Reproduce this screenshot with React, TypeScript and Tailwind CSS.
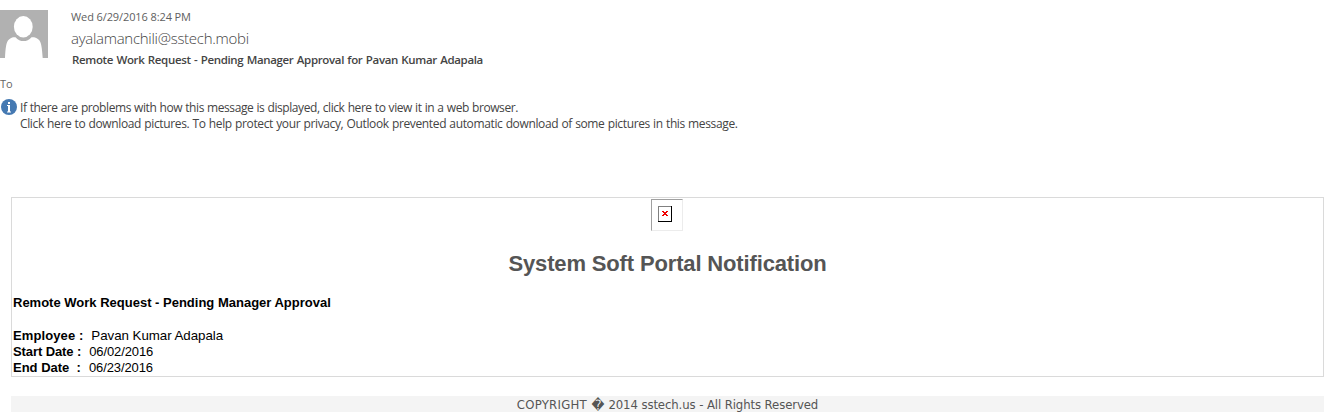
import React from "react";

function Avatar() {
  return (
    <svg className="block h-12 w-12 shrink-0" viewBox="0 0 48 48" aria-hidden="true">
      <rect width="48" height="48" fill="#b1b1b1" />
      <ellipse cx="23.3" cy="16.7" rx="9.4" ry="10.7" fill="#fff" />
      <path d="M5 48C5.6 38 6 32 9 29.5C11 27.5 13 27 15.5 27.2C20 32.4 27 32.4 31.5 27.2C34 27 36.500 27.500 38.500 29.500C41.500 32 42 38 42.700 48Z" fill="#fff" />
    </svg>
  );
}

function InfoIcon() {
  return (
    <svg className="mt-px block h-4 w-4 shrink-0" viewBox="0 0 16 16" aria-hidden="true">
      <circle cx="8" cy="8" r="8" fill="#4579b2" />
      <path d="M7 3H9V5H7ZM6 6H9V12.500H10V13.500H6V12.500H7V7H6Z" fill="#fff" />
    </svg>
  );
}

function BlockedPicture() {
  return (
    <div className="mt-px ml-[639px] flex h-8 w-8 border border-t-[#a0a0a0] border-r-[#ececec] border-b-[#ececec] border-l-[#a0a0a0] pt-[6px] pl-[6px]">
      <svg className="block h-4 w-[14px]" viewBox="0 0 14 16" shapeRendering="crispEdges" aria-hidden="true">
        <path d="M0 0H14V16H0Z" fill="#000" />
        <path d="M0 0H13V15H0Z" fill="#808080" />
        <path d="M1 1H13V15H1Z" fill="#fff" />
        <path d="M4 5h2v1h2v-1h2v1h-1v1h-1v1h1v1h1v1h-2v-1h-2v1h-2v-1h1v-1h1v-1h-1v-1h-1z" fill="#f00000" />
      </svg>
    </div>
  );
}

function Row({ label, value, className, gap }: { label: string; value: string; className?: string; gap: string }) {
  return (
    <div className="flex h-4 items-center whitespace-pre">
      <b className={className}>{label}</b>
      <span className={gap}>{value}</span>
    </div>
  );
}

export default function App() {
  return (
    <main className="h-[412px] w-[1337px] overflow-hidden bg-white font-['Open_Sans',sans-serif] text-[12px] text-[#444]">
      <header className="flex h-[68px] pt-[10px]">
        <Avatar />
        <div className="ml-[23px] whitespace-nowrap">
          <div className="h-[17px] text-[11px] leading-[14px] tracking-[-0.1px] text-[#606060]">Wed 6/29/2016 8:24 PM</div>
          <div className="h-[24px] text-[15px] leading-[23px] font-light tracking-[-0.28px] text-[#444]">ayalamanchili@sstech.mobi</div>
          <div className="ml-px text-[11.5px] leading-[18px] font-semibold tracking-[-0.35px] [word-spacing:0.75px] text-[#444]">Remote Work Request - Pending Manager Approval for Pavan Kumar Adapala</div>
        </div>
      </header>
      <div className="h-[30px] pt-2 text-[11px] leading-4 text-[#666]">To</div>
      <section className="flex pl-px">
        <InfoIcon />
        <div className="ml-[3px] pt-[2px] leading-4 whitespace-nowrap">
          <p className="tracking-[-0.42px] [word-spacing:0.43px]">If there are problems with how this message is displayed, click here to view it in a web browser.</p>
          <p className="tracking-[-0.36px] [word-spacing:0.43px]">Click here to download pictures. To help protect your privacy, Outlook prevented automatic download of some pictures in this message.</p>
        </div>
      </section>
      <section className="mt-[65px] ml-[11px] h-[180px] w-[1313px] border border-[#dadada] font-['Liberation_Sans',sans-serif] text-[13px] text-black">
        <BlockedPicture />
        <h1 className="mt-[17px] text-center text-[22px] leading-8 font-bold tracking-[-0.15px] text-[#555]">System Soft Portal Notification</h1>
        <div className="mt-[15px] pl-px leading-4">
          <div className="mb-[17px] font-bold">Remote Work Request - Pending Manager Approval</div>
          <Row label="Employee :" value="Pavan Kumar Adapala" className="tracking-[0.1px]" gap="ml-[8px] text-[13.333px] tracking-[-0.05px]" />
          <Row label="Start Date :" value="06/02/2016" className="tracking-[-0.1px]" gap="ml-[8px] tracking-[-0.1px]" />
          <Row label="End Date  :" value="06/23/2016" gap="ml-[8px] tracking-[-0.1px]" />
        </div>
      </section>
      <footer className="mt-[19px] ml-[11px] flex h-4 w-[1313px] items-center justify-center bg-[#f4f4f4] pt-px font-['DejaVu_Sans_Condensed','DejaVu_Sans',sans-serif] text-[13px] leading-4 font-stretch-condensed whitespace-pre text-[#555]">
        <span className="tracking-[0.25px]">COPYRIGHT </span>
        <span className="px-[0.5px] text-[14px] font-stretch-normal">�</span>
        <span className="tracking-[-0.1px]"> 2014 sstech.us - All Rights Reserved</span>
      </footer>
    </main>
  );
}
